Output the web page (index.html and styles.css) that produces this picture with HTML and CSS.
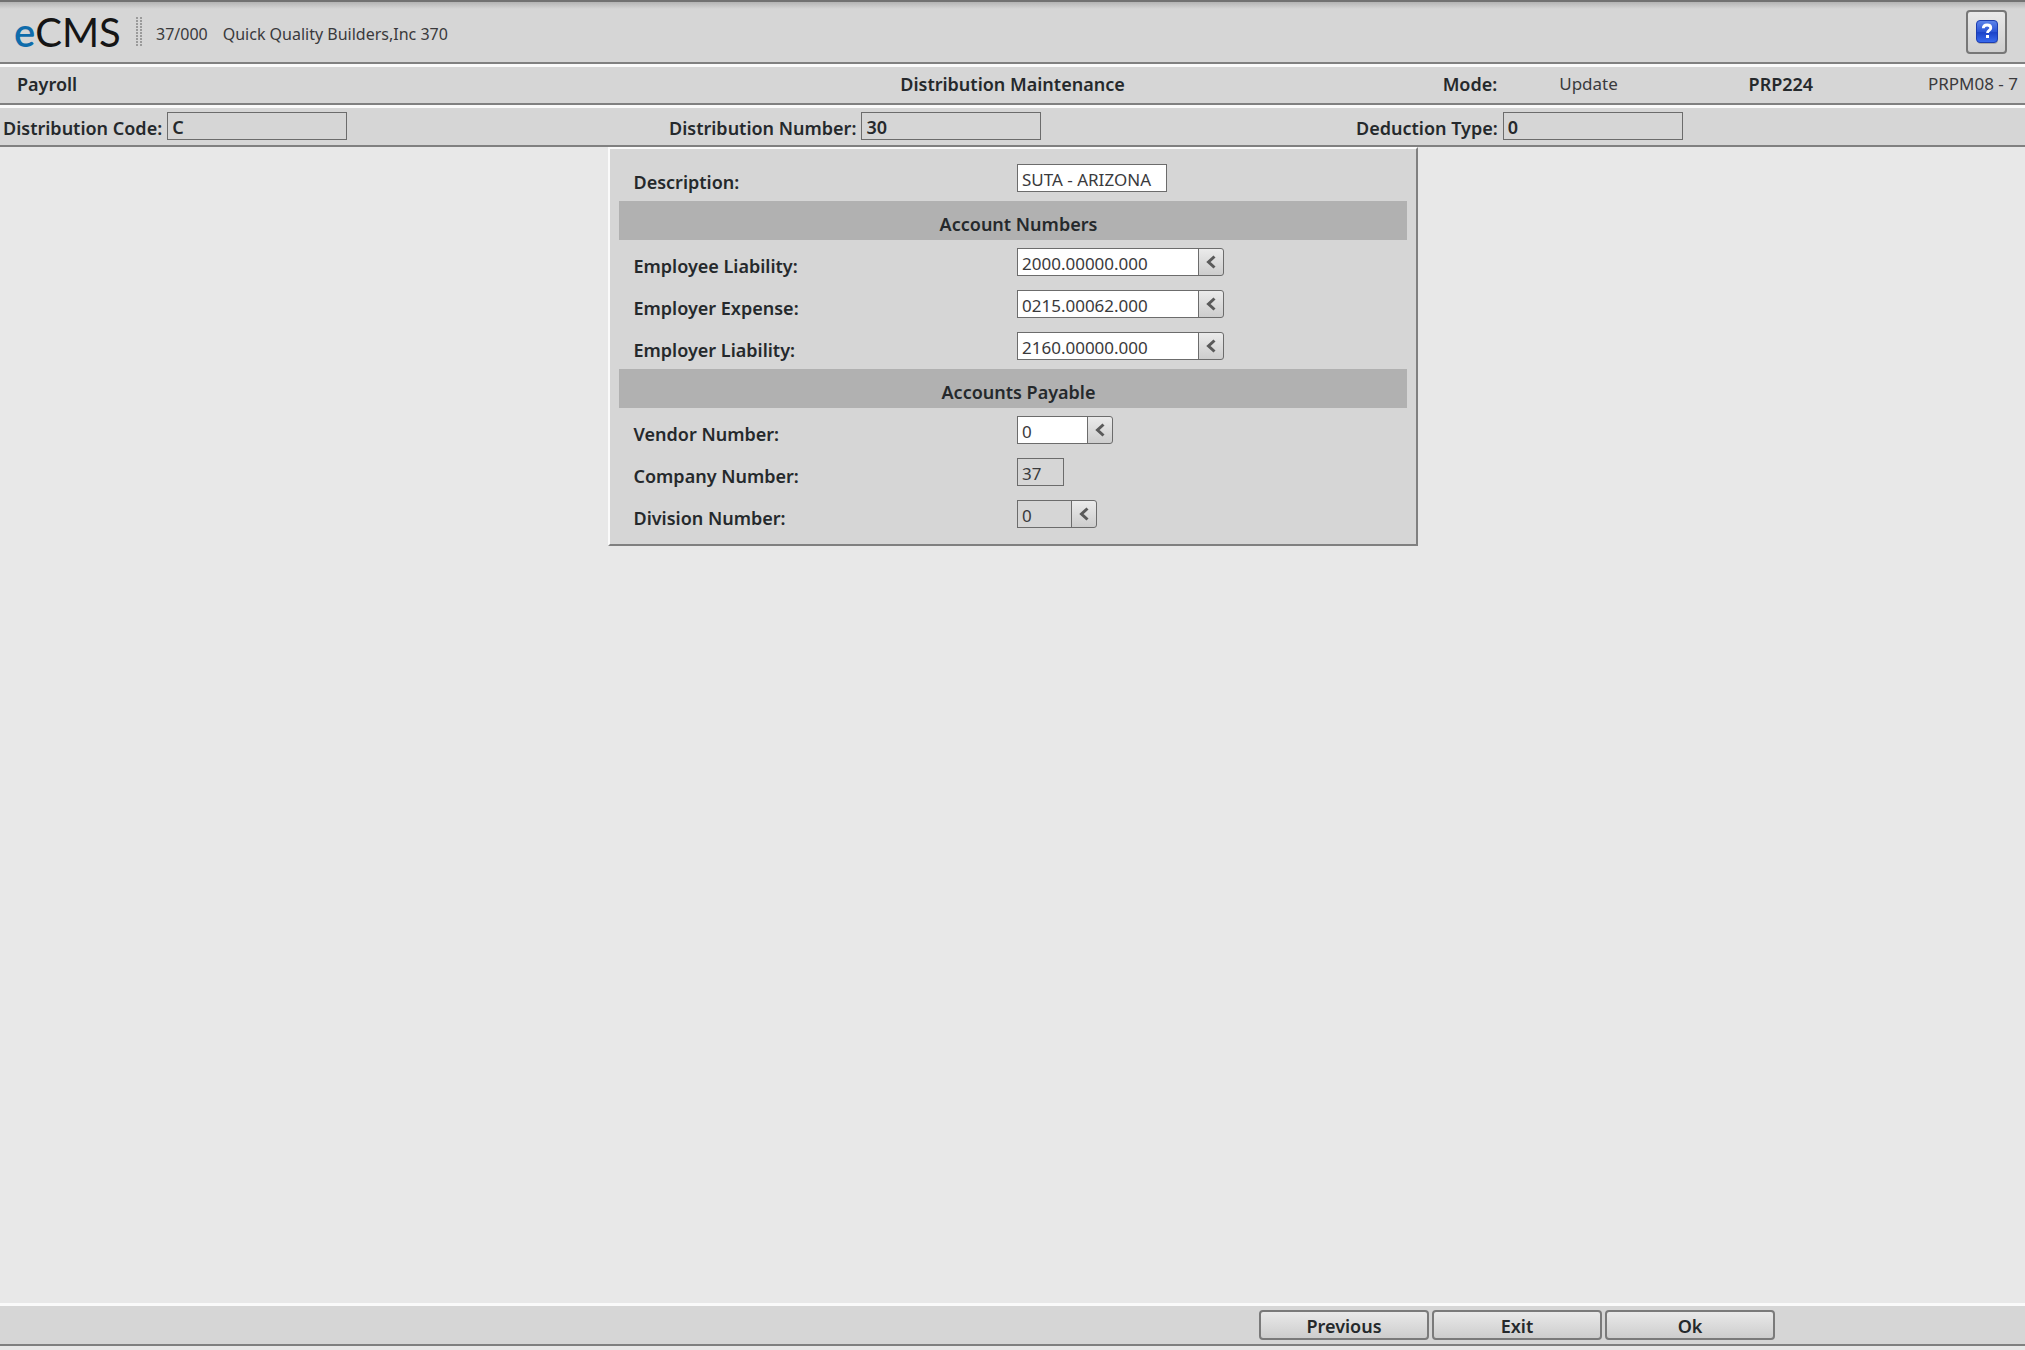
FILE: index.html
```html
<!DOCTYPE html>
<html lang="en">
<head>
<meta charset="utf-8">
<title>eCMS - Distribution Maintenance</title>
<link rel="stylesheet" href="styles.css">
</head>
<body>
<header class="masthead">
  <div class="logo"><span class="logo-e">e</span>CMS</div>
  <svg class="grip" width="7" height="30" viewBox="0 0 7 30" aria-hidden="true">
    <defs>
      <pattern id="dots" width="4" height="3" patternUnits="userSpaceOnUse">
        <rect width="2" height="2" fill="#9a9a9a"/>
      </pattern>
    </defs>
    <rect width="7" height="30" fill="url(#dots)"/>
  </svg>
  <div class="company"><span>37/000</span><span>Quick Quality Builders,Inc 370</span></div>
  <button class="help" type="button" aria-label="Help">
    <svg width="24" height="26" viewBox="0 0 24 26" aria-hidden="true">
      <defs>
        <linearGradient id="blue" x1="0" y1="0" x2="0" y2="1">
          <stop offset="0" stop-color="#5f86ea"/>
          <stop offset=".5" stop-color="#2c55d6"/>
          <stop offset=".55" stop-color="#1b43c8"/>
          <stop offset="1" stop-color="#3a6cf0"/>
        </linearGradient>
      </defs>
      <rect x="2" y="3" width="21" height="22" rx="4" fill="#000" opacity=".2"/>
      <rect x="1.5" y="1.5" width="21" height="22" rx="3.5" fill="url(#blue)" stroke="#1d3db0"/>
      <path d="M8.3 9.3c0-2.3 1.5-3.3 3.8-3.3s3.7 1 3.7 2.900c0 2.500-3.300 2.500-3.300 5.100" fill="none" stroke="#fff" stroke-width="2.8"/>
      <rect x="11" y="16" width="3" height="3" fill="#fff"/>
    </svg>
  </button>
</header>

<div class="titlebar">
  <strong class="module">Payroll</strong>
  <h1 class="title">Distribution Maintenance</h1>
  <div class="status">
    <strong class="status-mode">Mode:</strong>
    <span>Update</span>
    <strong>PRP224</strong>
    <span class="status-screen">PRPM08 - 7</span>
  </div>
</div>

<form class="screen">
  <div class="keys">
    <div class="key"><label for="code">Distribution Code:</label><input class="field locked key-field" id="code" value="C" readonly></div>
    <div class="key"><label for="number">Distribution Number:</label><input class="field locked key-field" id="number" value="30" readonly></div>
    <div class="key"><label for="type">Deduction Type:</label><input class="field locked key-field" id="type" value="0" readonly></div>
  </div>

  <main class="workspace">
    <div class="panel">
      <div class="row"><label for="desc">Description:</label><div class="control"><input class="field w-desc" id="desc" value="SUTA - ARIZONA"></div></div>
      <h2 class="band">Account Numbers</h2>
      <div class="row"><label for="ee-liab">Employee Liability:</label><div class="control"><input class="field w-account" id="ee-liab" value="2000.00000.000"><button class="lookup" type="button" aria-label="Look up employee liability"><svg width="10" height="14" viewBox="0 0 10 14"><path d="M8.5 1.5L2.5 7l6 5.5"/></svg></button></div></div>
      <div class="row"><label for="er-exp">Employer Expense:</label><div class="control"><input class="field w-account" id="er-exp" value="0215.00062.000"><button class="lookup" type="button" aria-label="Look up employer expense"><svg width="10" height="14" viewBox="0 0 10 14"><path d="M8.5 1.5L2.5 7l6 5.5"/></svg></button></div></div>
      <div class="row"><label for="er-liab">Employer Liability:</label><div class="control"><input class="field w-account" id="er-liab" value="2160.00000.000"><button class="lookup" type="button" aria-label="Look up employer liability"><svg width="10" height="14" viewBox="0 0 10 14"><path d="M8.5 1.5L2.5 7l6 5.5"/></svg></button></div></div>
      <h2 class="band">Accounts Payable</h2>
      <div class="row"><label for="vendor">Vendor Number:</label><div class="control"><input class="field w-vendor" id="vendor" value="0"><button class="lookup" type="button" aria-label="Look up vendor"><svg width="10" height="14" viewBox="0 0 10 14"><path d="M8.5 1.5L2.5 7l6 5.5"/></svg></button></div></div>
      <div class="row"><label for="company">Company Number:</label><div class="control"><input class="field locked w-company" id="company" value="37" readonly></div></div>
      <div class="row"><label for="division">Division Number:</label><div class="control"><input class="field locked w-division" id="division" value="0" readonly><button class="lookup" type="button" aria-label="Look up division"><svg width="10" height="14" viewBox="0 0 10 14"><path d="M8.5 1.5L2.5 7l6 5.5"/></svg></button></div></div>
    </div>
  </main>

  <footer class="actions">
    <button class="action" type="button">Previous</button>
    <button class="action" type="button">Exit</button>
    <button class="action" type="submit">Ok</button>
  </footer>
</form>
</body>
</html>
```
FILE: styles.css
```css
:root {
  --line: #808080;
  --bar: #d6d6d6;
  --ink: #25292c;
  --band: #b1b1b1;
}

* { box-sizing: border-box; }

body {
  margin: 0;
  min-height: 100vh;
  display: flex;
  flex-direction: column;
  background: #e8e8e8;
  color: var(--ink);
  font: 600 18px/24px "Noto Sans", "Open Sans", sans-serif;
}

input, button { font: inherit; color: inherit; }
strong, h1, h2 { font: inherit; margin: 0; }

/* top bar with logo and company */
.masthead {
  display: flex;
  align-items: center;
  height: 64px;
  padding: 0 18px 0 14px;
  border-top: 2px solid #727272;
  border-bottom: 2px solid var(--line);
  background: linear-gradient(#b4b4b4, var(--bar) 7px);
}
.logo {
  width: 122px;
  font: 400 40px/60px Lato, sans-serif;
  color: #151515;
}
.logo-e { color: #0f6cab; font-weight: 600; }
.company {
  display: flex;
  gap: 15px;
  margin: 4px auto 0 13px;
  font-size: 16px;
  font-weight: 400;
  color: #3a3a3c;
}
.help {
  display: grid;
  place-items: center;
  width: 41px;
  height: 44px;
  padding: 0;
  border: 2px solid #777;
  border-radius: 4px;
  background: linear-gradient(#e9e9e9, #cfcfcf);
}

/* module, screen title and mode */
.titlebar {
  display: grid;
  grid-template-columns: 1fr auto 1fr;
  height: 41px;
  padding-top: 5px;
  border-top: 3px solid #fafafa;
  border-bottom: 2px solid var(--line);
}
.titlebar, .keys, .actions { background: var(--bar); }
.module { padding-left: 17px; }
.status {
  display: grid;
  grid-template-columns: 319fr 117fr 190fr 180fr 95fr;
}
.status-mode { grid-column: 2; }
.status span { font-size: 17px; font-weight: 400; color: #3a3a3c; }
.status .status-screen { padding-right: 7px; text-align: right; white-space: nowrap; }

.screen { flex: 1; display: flex; flex-direction: column; }

/* record keys */
.keys {
  display: grid;
  grid-template-columns: 666fr 687fr 672fr;
  height: 42px;
  border-top: 3px solid #fafafa;
  border-bottom: 2px solid var(--line);
}
.key {
  display: flex;
  gap: 5px;
  padding: 4px 0 0 3px;
}
.key label { padding-top: 4px; }

.field {
  height: 28px;
  padding: 3px 4px 0 4px;
  border: 1px solid #6c6c6c;
  border-radius: 0;
  background: #fff;
  color: #3a3a3c;
  font-size: 17px;
  font-weight: 400;
}
.locked { background: var(--bar); }
.key-field { width: 180px; padding-top: 2px; color: var(--ink); font-size: 18px; font-weight: 600; }

/* form panel */
.workspace { flex: 1; }
.panel {
  display: grid;
  gap: 3px;
  width: 40%;
  min-width: 700px;
  margin: 0 auto;
  padding: 10px 9px;
  border: 2px solid #fafafa;
  border-right-color: var(--line);
  border-bottom-color: var(--line);
  background: var(--bar);
}
.row, .band { height: 39px; }
.band {
  padding: 7px 0 0 12px;
  background: var(--band);
  line-height: 32px;
  text-align: center;
}
.row {
  display: grid;
  grid-template-columns: 383fr 389fr;
  padding-left: 15px;
}
.row label { padding-top: 7px; line-height: 32px; }
.control { display: flex; padding-top: 5px; }
.w-desc { width: 150px; }
.w-account { width: 182px; }
.w-vendor { width: 71px; }
.w-company { width: 47px; }
.w-division { width: 55px; }

.lookup {
  display: grid;
  place-items: center;
  width: 26px;
  height: 28px;
  margin-left: -1px;
  padding: 0;
  border: 1px solid #6c6c6c;
  border-radius: 0 3px 3px 0;
  background: linear-gradient(#ebebeb, #cdcdcd);
}
.lookup path { fill: none; stroke: #5a5a5a; stroke-width: 3; }

/* bottom buttons */
.actions {
  display: flex;
  justify-content: flex-end;
  gap: 3px;
  height: 43px;
  margin-bottom: 4px;
  padding: 4px 250px 0 0;
  border-top: 3px solid #fafafa;
  border-bottom: 2px solid var(--line);
}
.action {
  width: 170px;
  height: 30px;
  padding: 3px 0 0;
  border: 2px solid #7a7a7a;
  border-radius: 4px;
  background: linear-gradient(#e9e9e9, #cdcdcd);
  line-height: 23px;
}
```
